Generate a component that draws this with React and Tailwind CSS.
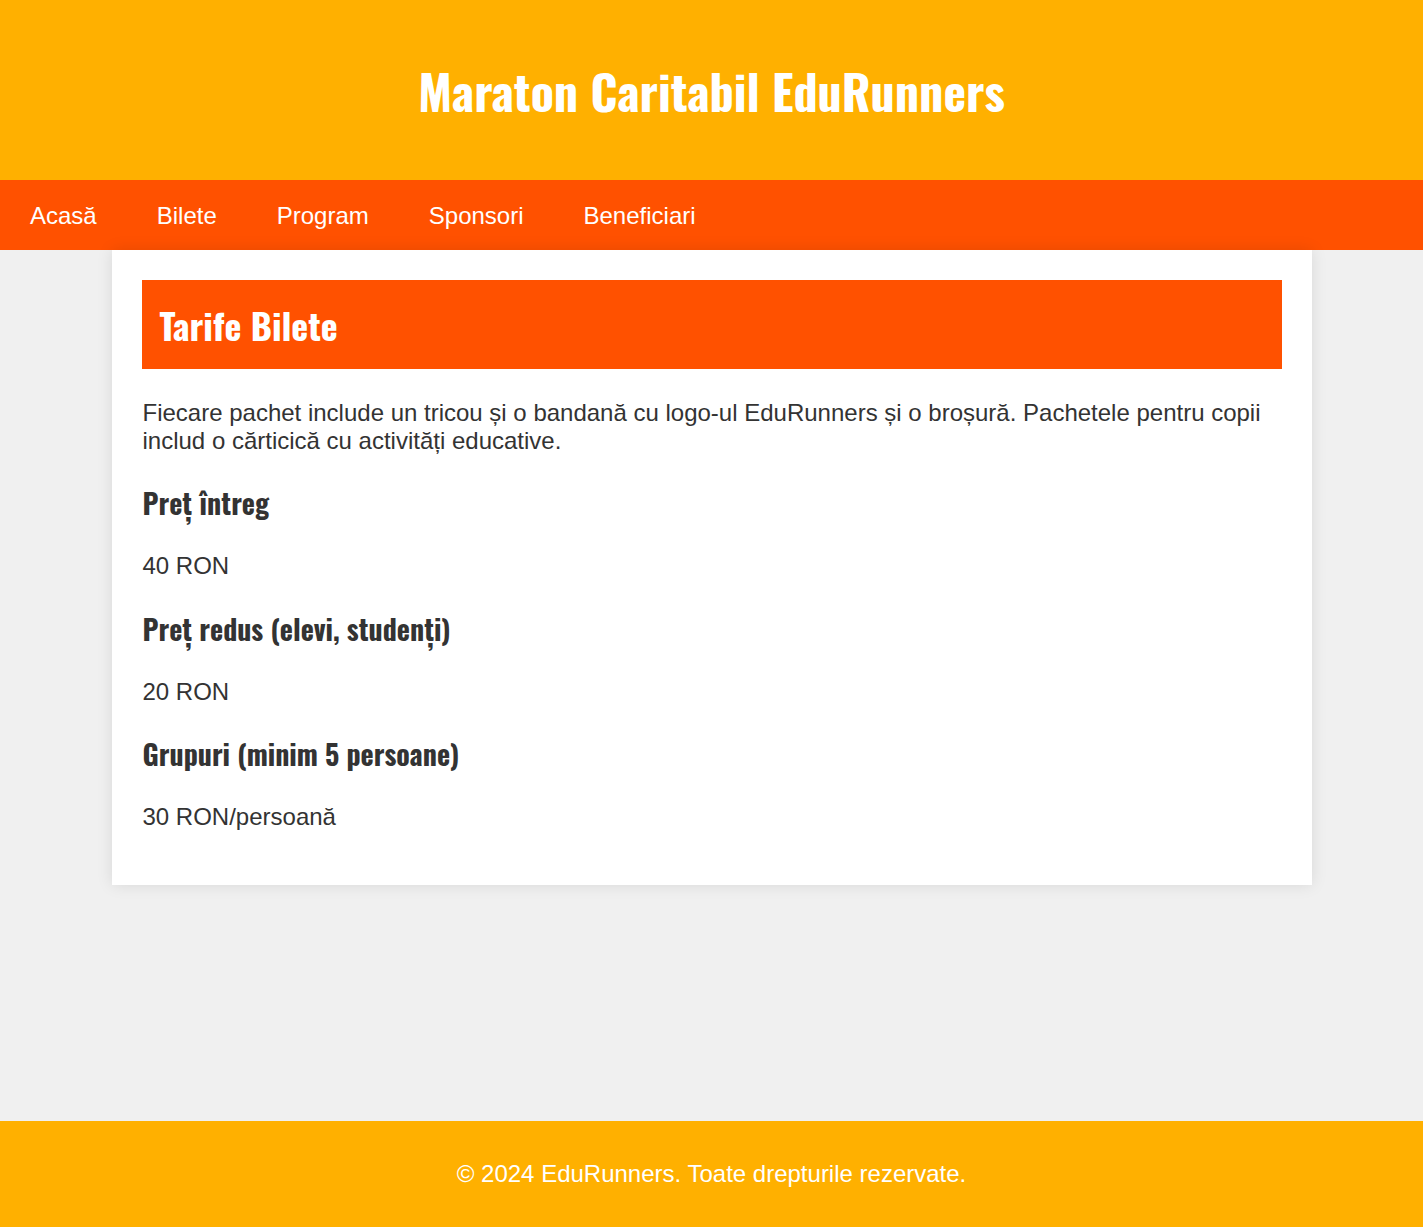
const heading = "font-['Oswald','Liberation_Sans_Narrow','DejaVu_Sans_Condensed',sans-serif] font-bold";

const navLinks = ['Acasă', 'Bilete', 'Program', 'Sponsori', 'Beneficiari'];

const tariffs = [
  { title: 'Preț întreg', price: '40 RON' },
  { title: 'Preț redus (elevi, studenți)', price: '20 RON' },
  { title: 'Grupuri (minim 5 persoane)', price: '30 RON/persoană' },
];

const App = () => {
  return (
    <div className="min-h-screen flex flex-col bg-[#f0f0f0] text-[#333] font-['Liberation_Sans',Arial,sans-serif] text-[24px]">
      {/* Header */}
      <header className="h-[180px] bg-[#ffb000] flex items-center justify-center">
        <h1 className={`${heading} text-white text-[48px] leading-[71px]`}>
          Maraton Caritabil EduRunners
        </h1>
      </header>

      {/* Nav */}
      <nav className="h-[70px] bg-[#ff5100] flex items-center pt-px">
        {navLinks.map((link) => (
          <a key={link} href="#" className="px-[30px] text-white text-[24px]">
            {link}
          </a>
        ))}
      </nav>

      {/* Main card */}
      <main className="flex-1">
        <section className="w-[1200px] mx-auto bg-white p-[30px] shadow-[0_0_15px_rgba(0,0,0,0.1)] relative">
          <h2 className={`${heading} bg-[#ff5100] text-white text-[36px] leading-[53px] py-[18px] px-[18px]`}>
            Tarife Bilete
          </h2>
          <p className="mt-[30px] mb-[28px] leading-[27.6px] pl-px">
            Fiecare pachet include un tricou și o bandană cu logo-ul EduRunners și o broșură. Pachetele pentru copii
            includ o cărticică cu activități educative.
          </p>
          {tariffs.map((t, i) => (
            <div key={t.title}>
              <h3 className={`${heading} text-[28px] leading-[42px] pl-px`}>{t.title}</h3>
              <p className={`mt-[28px] leading-[27.6px] pl-px ${i === tariffs.length - 1 ? 'mb-[24px]' : 'mb-[28px]'}`}>
                {t.price}
              </p>
            </div>
          ))}
        </section>
      </main>

      {/* Footer */}
      <footer className="h-[106px] bg-[#ffb000] flex items-center justify-center text-white">
        <p>© 2024 EduRunners. Toate drepturile rezervate.</p>
      </footer>
    </div>
  );
};

export default App;
